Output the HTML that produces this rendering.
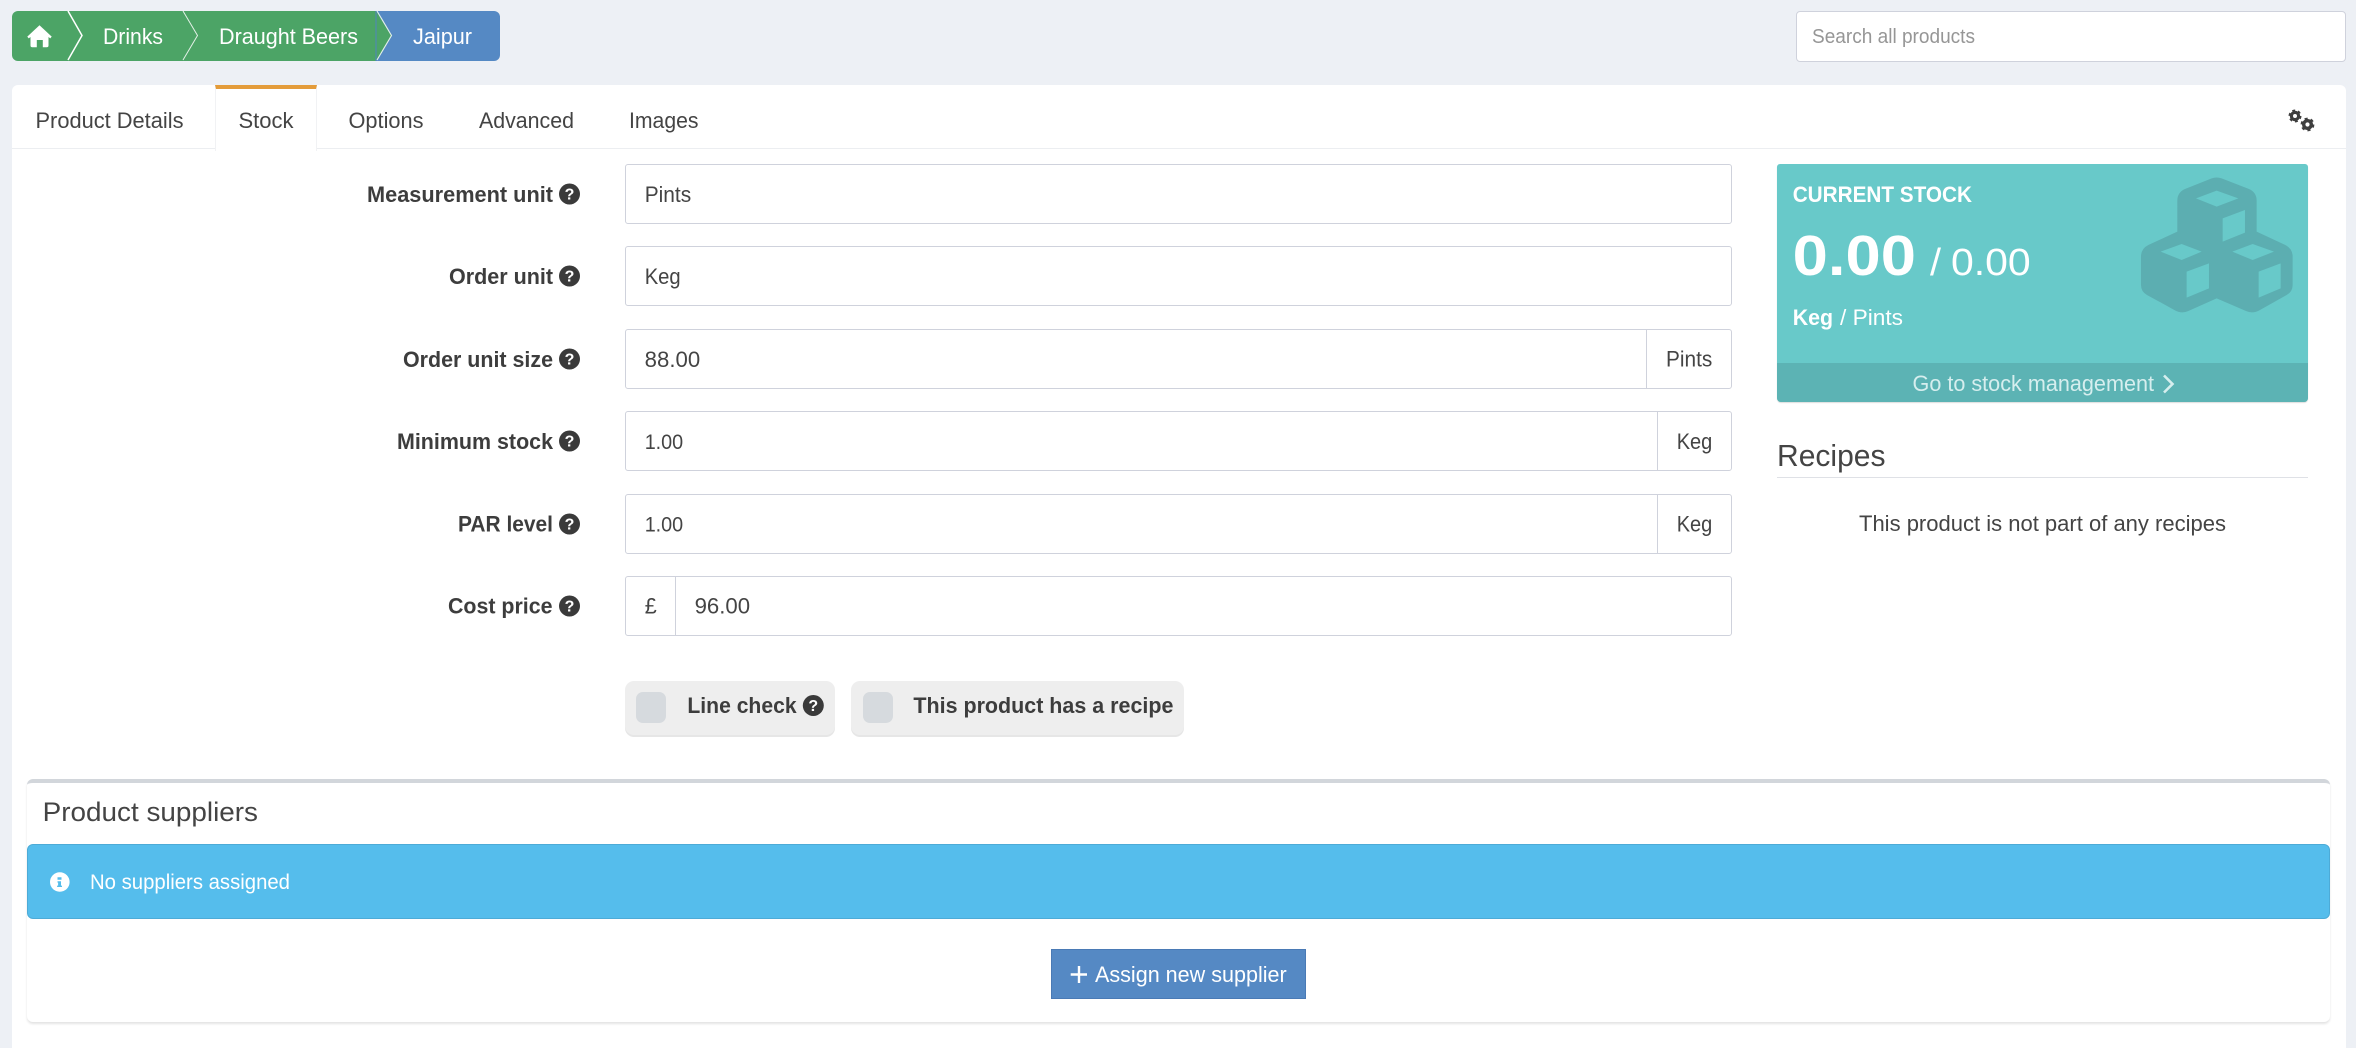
<!DOCTYPE html>
<html lang="en">
<head>
<meta charset="utf-8">
<title>Jaipur - Stock</title>
<style>
html,body{margin:0;padding:0;background:#edf0f5;width:2356px;height:1048px;overflow:hidden}
body{position:relative;font-family:"Liberation Sans",sans-serif;color:#444}
.b{position:absolute;box-sizing:border-box}
.card{left:12px;top:85px;width:2334px;height:963px;background:#fff;border-radius:6px 6px 0 0}
.tabline{left:12px;top:148px;width:2334px;height:1px;background:#eceef1}
.tab{left:215px;top:85px;width:102px;height:66px;background:#fff;border-left:1px solid #f1f2f4;border-right:1px solid #f1f2f4;border-top:4px solid #e49c3a}
.search{left:1796px;top:11px;width:550px;height:51px;background:#fff;border:1px solid #cfd2dc;border-radius:4px}
.in{left:625px;width:1107px;height:60px;background:#fff;border:1px solid #cfd2dc;border-radius:3px}
.add{width:1px;height:60px;background:#cfd2dc}
.pill{top:681px;height:54px;background:#eeeeee;border-radius:9px;box-shadow:0 2px 0 #e6e6e6}
.sq{top:692px;width:30px;height:31px;background:#d6dade;border-radius:7px}
.panel{left:1777px;top:164px;width:531px;height:238px;background:#68c9c9;border-radius:3px 3px 4px 4px;box-shadow:0 1px 1px #ddd}
.pfoot{left:1777px;top:363px;width:531px;height:39px;background:#5cb3b4;border-radius:0 0 4px 4px}
.rule{left:1777px;top:477px;width:531px;height:1px;background:#dfe1e6}
.sup{left:27px;top:779px;width:2303px;height:243px;background:#fff;border-top:4px solid #d2d6db;border-radius:6px;box-shadow:0 2px 2px #e4e4e4}
.alert{left:27px;top:844px;width:2303px;height:75px;background:#55bdec;border:1px solid #4dabd7;border-radius:6px}
.btn{left:1051px;top:949px;width:255px;height:50px;background:#5589c4;border:1px solid #4a7ab5}
svg.o{position:absolute;left:0;top:0}
text{font-family:"Liberation Sans",sans-serif;fill:#444}
.l{font-size:22px;font-weight:700;fill:#3d3d3d}
.v{font-size:22px}
.w,.l.w{fill:#fff}
.h{fill:#fff;font-size:16px;font-weight:700;text-anchor:middle}
</style>
</head>
<body>
<div class="b card"></div>
<div class="b tabline"></div>
<div class="b tab"></div>
<div class="b search"></div>

<div class="b in" style="top:164px"></div>
<div class="b in" style="top:246px"></div>
<div class="b in" style="top:329px"></div>
<div class="b add" style="left:1646px;top:329px"></div>
<div class="b in" style="top:411px"></div>
<div class="b add" style="left:1657px;top:411px"></div>
<div class="b in" style="top:494px"></div>
<div class="b add" style="left:1657px;top:494px"></div>
<div class="b in" style="top:576px"></div>
<div class="b add" style="left:675px;top:576px"></div>

<div class="b pill" style="left:625px;width:210px"></div>
<div class="b sq" style="left:636px"></div>
<div class="b pill" style="left:851px;width:333px"></div>
<div class="b sq" style="left:863px"></div>

<div class="b panel"></div>
<div class="b pfoot"></div>
<div class="b rule"></div>

<div class="b sup"></div>
<div class="b alert"></div>
<div class="b btn"></div>

<svg class="o" width="2356" height="1048" viewBox="0 0 2356 1048" xmlns="http://www.w3.org/2000/svg">
  <!-- breadcrumb -->
  <path d="M376 11H494a6 6 0 0 1 6 6V55a6 6 0 0 1-6 6H376Z" fill="#5589c4"/>
  <path d="M18 11H376V61H18a6 6 0 0 1-6-6V17a6 6 0 0 1 6-6Z" fill="#4ca466"/>
  <path d="M376 11L391 35.500L376 61Z" fill="#4ca466"/>
  <path d="M376 11V61" stroke="#4f84bd" stroke-width="1"/>
  <path d="M68 11L82 35.500L68 60" fill="none" stroke="#fff" stroke-width="1.500"/>
  <path d="M183 11L197.500 35.500L183 60" fill="none" stroke="#e4f1e8" stroke-width="1"/>
  <path d="M377 11L391.500 35.500L377 60" fill="none" stroke="#e4f1e8" stroke-width="1.100"/>
  <path d="M39.500 25.300L51.700 36.600L50.300 38.400L48.500 37V45.500a1.800 1.800 0 0 1-1.800 1.800H42.800V40H36.800V47.300H32.300a1.800 1.800 0 0 1-1.800-1.800V37L28.700 38.400L27.300 36.600Z" fill="#fff"/>
  <text class="v w" x="103" y="44" textLength="60" lengthAdjust="spacingAndGlyphs">Drinks</text>
  <text class="v w" x="219" y="44" textLength="139" lengthAdjust="spacingAndGlyphs">Draught Beers</text>
  <text class="v w" x="413" y="44" textLength="59" lengthAdjust="spacingAndGlyphs">Jaipur</text>
  <text x="1812" y="43" font-size="20" style="fill:#969696" textLength="163" lengthAdjust="spacingAndGlyphs">Search all products</text>

  <!-- tabs -->
  <text class="v" x="35.500" y="128" textLength="148" lengthAdjust="spacingAndGlyphs">Product Details</text>
  <text class="v" x="238.500" y="128" textLength="55" lengthAdjust="spacingAndGlyphs">Stock</text>
  <text class="v" x="348.500" y="128" textLength="75" lengthAdjust="spacingAndGlyphs">Options</text>
  <text class="v" x="479" y="128" textLength="95" lengthAdjust="spacingAndGlyphs">Advanced</text>
  <text class="v" x="629" y="128" textLength="69.500" lengthAdjust="spacingAndGlyphs">Images</text>
  <g fill="none" stroke="#3f3f3f">
    <circle cx="2295" cy="116" r="3.600" stroke-width="3.200"/>
    <circle cx="2295" cy="116" r="5.500" stroke-width="2" stroke-dasharray="2.880 2.880"/>
    <circle cx="2307.500" cy="124.500" r="3.800" stroke-width="3.400"/>
    <circle cx="2307.500" cy="124.500" r="5.900" stroke-width="2" stroke-dasharray="3.090 3.090"/>
  </g>

  <!-- labels -->
  <text class="l" x="367" y="202" textLength="186" lengthAdjust="spacingAndGlyphs">Measurement unit</text>
  <text class="l" x="449" y="284" textLength="104" lengthAdjust="spacingAndGlyphs">Order unit</text>
  <text class="l" x="403" y="367" textLength="150" lengthAdjust="spacingAndGlyphs">Order unit size</text>
  <text class="l" x="397" y="449" textLength="156" lengthAdjust="spacingAndGlyphs">Minimum stock</text>
  <text class="l" x="458" y="531.500" textLength="95" lengthAdjust="spacingAndGlyphs">PAR level</text>
  <text class="l" x="448" y="613.500" textLength="104.500" lengthAdjust="spacingAndGlyphs">Cost price</text>
  <g fill="#3a3a3a">
    <circle cx="569.500" cy="194" r="10.500"/><circle cx="569.500" cy="276" r="10.500"/>
    <circle cx="569.500" cy="359" r="10.500"/><circle cx="569.500" cy="441" r="10.500"/>
    <circle cx="569.500" cy="524" r="10.500"/><circle cx="569.500" cy="606" r="10.500"/>
    <circle cx="813.300" cy="705.500" r="10.500"/>
  </g>
  <text class="h" x="569.500" y="199.700">?</text><text class="h" x="569.500" y="281.700">?</text>
  <text class="h" x="569.500" y="364.700">?</text><text class="h" x="569.500" y="446.700">?</text>
  <text class="h" x="569.500" y="529.700">?</text><text class="h" x="569.500" y="611.700">?</text>
  <text class="h" x="813.300" y="711.200">?</text>

  <!-- values -->
  <text class="v" x="644.700" y="202" textLength="46.500" lengthAdjust="spacingAndGlyphs">Pints</text>
  <text class="v" x="644.700" y="284" textLength="36" lengthAdjust="spacingAndGlyphs">Keg</text>
  <text class="v" x="644.700" y="367" textLength="55.500" lengthAdjust="spacingAndGlyphs">88.00</text>
  <text x="644.700" y="449" font-size="21.500" textLength="38.500" lengthAdjust="spacingAndGlyphs">1.00</text>
  <text x="644.700" y="531.500" font-size="21.500" textLength="38.500" lengthAdjust="spacingAndGlyphs">1.00</text>
  <text class="v" x="644.700" y="613.500" textLength="12" lengthAdjust="spacingAndGlyphs">£</text>
  <text class="v" x="694.600" y="613.500" textLength="55.500" lengthAdjust="spacingAndGlyphs">96.00</text>
  <text class="v" x="1666" y="366.500" textLength="46.300" lengthAdjust="spacingAndGlyphs">Pints</text>
  <text class="v" x="1676.700" y="449" textLength="35.600" lengthAdjust="spacingAndGlyphs">Keg</text>
  <text class="v" x="1676.700" y="531.500" textLength="35.600" lengthAdjust="spacingAndGlyphs">Keg</text>

  <text class="l" x="687.400" y="713" textLength="109.200" lengthAdjust="spacingAndGlyphs">Line check</text>
  <text class="l" x="913.400" y="713" textLength="260" lengthAdjust="spacingAndGlyphs">This product has a recipe</text>

  <!-- stock panel -->
  <g transform="translate(2100 160) scale(.3333)">
    <path fill-rule="evenodd" fill="#5caeb1" d="M335 55Q350 50 365 55L447 87Q470 97 470 122V215L556 255Q578 266 578 290V375Q578 395 560 405L478 451Q458 462 438 453L350 415L265 453Q245 462 225 451L141 405Q123 395 123 375V290Q123 266 145 255L232 215V122Q232 97 255 87Z M288 115L350 92L415 115L350 140Z M368 175L435 150V218L368 245Z M182 275L245 252L305 275L245 300Z M260 335L327 310V385L260 413Z M397 275L458 252L522 275L458 300Z M476 335L542 310V385L476 413Z"/>
  </g>
  <text class="l w" x="1792.700" y="202" textLength="179.300" lengthAdjust="spacingAndGlyphs">CURRENT STOCK</text>
  <text class="w" x="1792.700" y="275" font-size="57" font-weight="700" textLength="123.300" lengthAdjust="spacingAndGlyphs">0.00</text>
  <text class="w" x="1930" y="275" font-size="38" textLength="11" lengthAdjust="spacingAndGlyphs">/</text>
  <text class="w" x="1951" y="275" font-size="38" textLength="79.700" lengthAdjust="spacingAndGlyphs">0.00</text>
  <text class="l w" x="1792.700" y="325" textLength="40.300" lengthAdjust="spacingAndGlyphs">Keg</text>
  <text class="v w" x="1840" y="325" textLength="63" lengthAdjust="spacingAndGlyphs">/ Pints</text>
  <text class="v" x="1912.500" y="391" style="fill:#d6eeee" textLength="241.500" lengthAdjust="spacingAndGlyphs">Go to stock management</text>
  <path d="M2164 375.500L2172.500 384L2164 392.500" fill="none" stroke="#d6eeee" stroke-width="2.600"/>

  <!-- recipes -->
  <text x="1777" y="466" font-size="31" textLength="108.500" lengthAdjust="spacingAndGlyphs">Recipes</text>
  <text class="v" x="1859" y="531" textLength="367" lengthAdjust="spacingAndGlyphs">This product is not part of any recipes</text>

  <!-- suppliers -->
  <text x="42.700" y="821" font-size="27" textLength="215.300" lengthAdjust="spacingAndGlyphs">Product suppliers</text>
  <circle cx="59.800" cy="882" r="9.800" fill="#fff"/>
  <path d="M57.500 877.200h4v2.600h-4zM57.500 881.200h3.500v4.400h1v1.400h-4.900v-1.400h1v-3h-.6z" fill="#55bdec"/>
  <text x="90" y="889" font-size="21" class="w" textLength="200" lengthAdjust="spacingAndGlyphs">No suppliers assigned</text>
  <path d="M1079 966V983M1070.700 974.500H1087" stroke="#fff" stroke-width="2.400" fill="none"/>
  <text class="v w" x="1095" y="982" textLength="191.700" lengthAdjust="spacingAndGlyphs">Assign new supplier</text>
</svg>
</body>
</html>
